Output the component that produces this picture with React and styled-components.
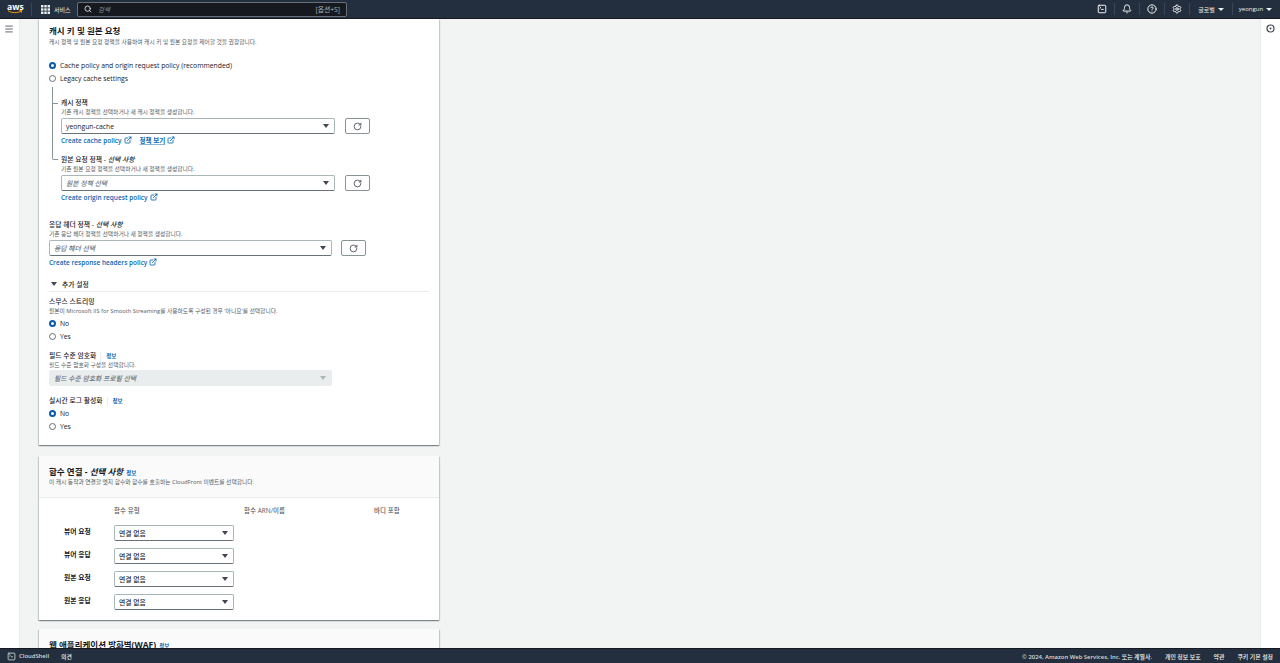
import React from 'react';
import styled, { createGlobalStyle } from 'styled-components';
import {
  Bell, CircleHelp, ExternalLink, Menu, RotateCw, Search, Settings, SquareTerminal,
} from 'lucide-react';

const fonts = '"Open Sans", "Noto Sans CJK KR", sans-serif';
const linkBlue = '#0a66b0';

const GlobalStyle = createGlobalStyle`
  html, body { margin: 0; height: 100%; }
  body { font-family: ${fonts}; background: #f2f3f3; color: #16191f; }
  * { box-sizing: border-box; }
`;

const Page = styled.div`
  width: 1280px;
  height: 663px;
  display: flex;
  flex-direction: column;
  overflow: hidden;
`;

const TopBar = styled.header`
  height: 19px;
  flex: none;
  display: flex;
  align-items: center;
  padding-right: 2px;
  background: #232f3e;
  border-bottom: 1px solid #16191f;
  color: #d5dbdb;
  font-size: 6px;
`;

const AwsLogo = styled.div`
  width: 25px;
  height: 13px;
  margin: 0 8px 0 7px;
  display: flex;
  flex-direction: column;
  align-items: flex-start;
  border-right: 1px solid #3a4654;
  color: #fff;
  font-size: 8.5px;
  font-weight: 700;
  line-height: 8px;
  svg { display: block; margin-top: -1px; }
`;

const ServicesBtn = styled.div`
  width: 37px;
  display: flex;
  align-items: center;
  gap: 4px;
  padding-left: 1px;
  color: #eaeded;
  svg { flex: none; }
`;

const SearchBox = styled.div`
  width: 270px;
  height: 15px;
  display: flex;
  align-items: center;
  gap: 6px;
  padding: 0 6px;
  background: #16191f;
  border: 1px solid #687078;
  border-radius: 2px;
  color: #eaeded;
`;

const SearchHint = styled.span`
  flex: 1;
  font-style: italic;
  font-size: 6.5px;
  color: #879596;
`;

const Shortcut = styled.span`
  font-size: 6.8px;
  color: #aab7b8;
`;

const TopRight = styled.div`
  margin-left: auto;
  display: flex;
  align-items: center;
  height: 100%;
`;

const TopIcon = styled.div`
  width: 25px;
  height: 12px;
  display: flex;
  align-items: center;
  justify-content: center;
  border-right: 1px solid #3a4654;
  color: #f2f3f3;
`;

const TopMenu = styled.div`
  width: ${({ $w }) => $w}px;
  height: 12px;
  display: flex;
  align-items: center;
  justify-content: center;
  gap: 3px;
  border-right: ${({ $sep }) => ($sep ? '1px solid #3a4654' : 'none')};
  color: #eaeded;
`;

const TinyCaret = styled.i`
  width: 0;
  height: 0;
  border-left: 3px solid transparent;
  border-right: 3px solid transparent;
  border-top: 3px solid #eaeded;
`;

const Body = styled.div`
  flex: 1;
  min-height: 0;
  display: flex;
`;

const SideNav = styled.nav`
  width: 20px;
  flex: none;
  background: #fff;
  border-right: 1px solid #e9ebed;
  padding: 5px 0 0 4px;
  color: #414750;
  svg { display: block; }
`;

const Content = styled.main`
  flex: 1;
  min-width: 0;
  padding-left: 19px;
  overflow: hidden;
`;

const Card = styled.section`
  width: 400px;
  margin-bottom: ${({ $mb }) => $mb || 0}px;
  background: #fff;
  box-shadow: 0 1px 1px rgba(0, 28, 36, 0.3), 1px 1px 1px rgba(0, 28, 36, 0.15), -1px 1px 1px rgba(0, 28, 36, 0.15);
`;

const CacheBody = styled.div`
  height: 426px;
  padding: 5px 10px 0;
`;

const CardTitle = styled.h2`
  margin: 0;
  font-size: 8.5px;
  line-height: ${({ $lh }) => $lh || 13}px;
  font-weight: 700;
  color: #16191f;
  em { font-weight: 700; }
`;

const Desc = styled.p`
  margin: 0;
  font-size: 5.75px;
  line-height: 9px;
  color: #545b64;
`;

const RadioList = styled.div`
  margin-top: ${({ $mt }) => $mt || 0}px;
  display: flex;
  flex-direction: column;
`;

const RadioRow = styled.div`
  height: 13px;
  display: flex;
  align-items: center;
  gap: 4px;
  font-size: 6.8px;
  font-weight: 500;
  color: #16191f;
`;

const RadioDot = styled.span`
  width: 7px;
  height: 7px;
  flex: none;
  border-radius: 50%;
  background: #fff;
  border: ${({ $on }) => ($on ? '2px solid #0a5ca8' : '1px solid #687078')};
`;

const Tree = styled.div`
  margin-left: 3px;
  padding-left: 9px;
`;

const TreeNode = styled.div`
  position: relative;
  padding-top: ${({ $pt }) => $pt}px;
  &::before {
    content: '';
    position: absolute;
    left: -9px;
    top: ${({ $top }) => $top}px;
    height: ${({ $len }) => $len}px;
    width: 5px;
    border-left: 1px solid #879596;
    border-bottom: 1px solid #879596;
    border-bottom-left-radius: ${({ $round }) => ($round ? 2 : 0)}px;
  }
`;

const FieldLabel = styled.div`
  display: flex;
  align-items: center;
  font-size: 6.8px;
  line-height: 10px;
  font-weight: 500;
  color: #16191f;
  em { font-weight: 500; }
`;

const InfoLink = styled.span`
  margin-left: ${({ $plain }) => ($plain ? 0 : 4)}px;
  padding-left: ${({ $plain }) => ($plain ? 0 : 5)}px;
  border-left: ${({ $plain }) => ($plain ? 'none' : '1px solid #eaeded')};
  font-size: 5.5px;
  font-weight: 700;
  color: ${linkBlue};
  line-height: 9px;
`;

const SelectRow = styled.div`
  margin-top: ${({ $mt }) => $mt || 0}px;
  display: flex;
  align-items: center;
  gap: ${({ $gap }) => $gap || 10}px;
`;

const Select = styled.div`
  width: ${({ $w }) => $w}px;
  height: 16px;
  display: flex;
  align-items: center;
  justify-content: space-between;
  padding: 0 4px;
  font-size: 6.8px;
  font-weight: 500;
  background: ${({ $disabled }) => ($disabled ? '#eaeded' : '#fff')};
  border: 1px solid ${({ $disabled }) => ($disabled ? '#eaeded' : '#aab7b8')};
  border-bottom-color: ${({ $disabled }) => ($disabled ? '#eaeded' : '#687078')};
  border-radius: 2px;
  color: ${({ $placeholder }) => ($placeholder ? '#687078' : '#16191f')};
  font-style: ${({ $placeholder }) => ($placeholder ? 'italic' : 'normal')};
`;

const Caret = styled.i`
  width: 0;
  height: 0;
  margin-right: 1px;
  border-left: 3px solid transparent;
  border-right: 3px solid transparent;
  border-top: 4px solid ${({ $disabled }) => ($disabled ? '#aab7b8' : '#414750')};
`;

const RefreshBtn = styled.div`
  width: 25px;
  height: 16px;
  display: flex;
  align-items: center;
  justify-content: center;
  background: #fff;
  border: 1px solid #879596;
  border-radius: 2px;
  color: #414750;
`;

const LinkRow = styled.div`
  height: 12px;
  display: flex;
  align-items: center;
  gap: 8px;
  font-size: 6.5px;
`;

const DocLink = styled.a`
  display: flex;
  align-items: center;
  gap: 2px;
  color: ${linkBlue};
  font-weight: 600;
  span {
    text-decoration: ${({ $underline }) => ($underline ? 'underline' : 'none')};
    text-decoration-thickness: 1px;
    text-decoration-color: #8db4d6;
  }
`;

const SpacedBlock = styled.div`
  margin-top: ${({ $mt }) => $mt || 0}px;
`;

const Expand = styled.div`
  height: 16px;
  margin-top: ${({ $mt }) => $mt || 0}px;
  padding-left: 2px;
  display: flex;
  align-items: center;
  gap: 4px;
  font-size: 6.8px;
  font-weight: 500;
  color: #16191f;
  border-bottom: 1px solid #eaeded;
`;

const CardHead = styled.div`
  height: 42px;
  padding: 9px 10px 0;
  background: #fafafa;
  border-bottom: 1px solid #eaeded;
`;

const HeadTitle = styled.div`
  display: flex;
  align-items: baseline;
  gap: 3px;
`;

const FnGrid = styled.div`
  height: 122px;
  padding: 8px 0 0 25px;
  display: grid;
  grid-template-columns: 50px 130px 130px 1fr;
  grid-template-rows: 19px;
  grid-auto-rows: 23px;
  align-content: start;
`;

const FnHead = styled.div`
  font-size: 6.5px;
  line-height: 9px;
  font-weight: 500;
  color: #545b64;
`;

const FnLabel = styled.div`
  grid-column: 1;
  font-size: 6.8px;
  font-weight: 700;
  padding-top: 2px;
  line-height: 10px;
`;

const FnCell = styled.div`
  grid-column: 2 / -1;
`;

const BottomBar = styled.footer`
  height: 15px;
  flex: none;
  display: flex;
  align-items: center;
  background: #232f3e;
  border-top: 1px solid #16191f;
  color: #d5dbdb;
  font-size: 5.9px;
  font-weight: 600;
  padding: 0 7px;
`;

const ShellBtn = styled.div`
  display: flex;
  align-items: center;
  gap: 3px;
  margin-right: 12px;
`;

const Legal = styled.div`
  margin-left: auto;
  display: flex;
  gap: 13px;
`;

const Rail = styled.aside`
  width: 20px;
  flex: none;
  background: #fff;
  border-left: 1px solid #e9ebed;
  padding: 5px 0 0 5px;
  color: #414750;
  svg { display: block; }
`;

const GridIcon = () => (
  <svg width="9" height="9" viewBox="0 0 11 11" fill="#eaeded">
    {[0, 4, 8].flatMap((y) => [0, 4, 8].map((x) => (
      <rect key={`${x}-${y}`} x={x} y={y} width="3" height="3" />
    )))}
  </svg>
);

const RailIcon = () => (
  <svg width="9" height="9" viewBox="0 0 9 9" fill="none" stroke="currentColor">
    <circle cx="4.5" cy="4.5" r="3.5" strokeWidth="1.2" />
    <circle cx="4.5" cy="4.5" r="1" fill="currentColor" strokeWidth="0" />
  </svg>
);

const Radio = ({ on, children }) => (
  <RadioRow>
    <RadioDot $on={on} />
    {children}
  </RadioRow>
);

const Ext = () => <ExternalLink size={8} strokeWidth={2.6} />;

const Refresh = () => (
  <RefreshBtn>
    <RotateCw size={9} strokeWidth={2.2} />
  </RefreshBtn>
);

const fnRows = ['뷰어 요청', '뷰어 응답', '원본 요청', '원본 응답'];

export default function App() {
  return (
    <Page>
      <GlobalStyle />
      <TopBar>
        <AwsLogo>
          aws
          <svg width="16" height="4" viewBox="0 0 16 4" fill="none">
            <path d="M1 .8c3.9 2.4 9.2 2.4 13 .4M12.4.6l2.4-.2-.5 2.2" stroke="#ff9900" strokeWidth="1" />
          </svg>
        </AwsLogo>
        <ServicesBtn>
          <GridIcon />
          서비스
        </ServicesBtn>
        <SearchBox>
          <Search size={8} strokeWidth={2.5} />
          <SearchHint>검색</SearchHint>
          <Shortcut>[옵션+S]</Shortcut>
        </SearchBox>
        <TopRight>
          <TopIcon><SquareTerminal size={10} strokeWidth={2.4} /></TopIcon>
          <TopIcon><Bell size={10} strokeWidth={2.4} /></TopIcon>
          <TopIcon><CircleHelp size={10} strokeWidth={2.4} /></TopIcon>
          <TopIcon><Settings size={10} strokeWidth={2.4} /></TopIcon>
          <TopMenu $w={43} $sep>글로벌 <TinyCaret /></TopMenu>
          <TopMenu $w={45}>yeongun <TinyCaret /></TopMenu>
        </TopRight>
      </TopBar>

      <Body>
        <SideNav><Menu size={10} strokeWidth={2} /></SideNav>
        <Content>
          <Card $mb={11}>
            <CacheBody>
              <CardTitle $lh={14}>캐시 키 및 원본 요청</CardTitle>
              <Desc>캐시 정책 및 원본 요청 정책을 사용하여 캐시 키 및 원본 요청을 제어할 것을 권장합니다.</Desc>
              <RadioList $mt={12}>
                <Radio on>Cache policy and origin request policy (recommended)</Radio>
                <Radio>Legacy cache settings</Radio>
              </RadioList>
              <Tree>
                <TreeNode $pt={13} $top={2} $len={16}>
                  <FieldLabel>캐시 정책</FieldLabel>
                  <Desc>기존 캐시 정책을 선택하거나 새 캐시 정책을 생성합니다.</Desc>
                  <SelectRow $mt={1}>
                    <Select $w={274}>yeongun-cache<Caret /></Select>
                    <Refresh />
                  </SelectRow>
                  <LinkRow>
                    <DocLink>Create cache policy <Ext /></DocLink>
                    <DocLink $underline><span>정책 보기</span> <Ext /></DocLink>
                  </LinkRow>
                </TreeNode>
                <TreeNode $pt={9} $top={-45} $len={58} $round>
                  <FieldLabel>원본 요청 정책 -&nbsp;<em>선택 사항</em></FieldLabel>
                  <Desc>기존 원본 요청 정책을 선택하거나 새 정책을 생성합니다.</Desc>
                  <SelectRow $mt={1}>
                    <Select $w={274} $placeholder>원본 정책 선택<Caret /></Select>
                    <Refresh />
                  </SelectRow>
                  <LinkRow>
                    <DocLink>Create origin request policy <Ext /></DocLink>
                  </LinkRow>
                </TreeNode>
              </Tree>
              <SpacedBlock $mt={17}>
                <FieldLabel>응답 헤더 정책 -&nbsp;<em>선택 사항</em></FieldLabel>
                <Desc>기존 응답 헤더 정책을 선택하거나 새 정책을 생성합니다.</Desc>
                <SelectRow $mt={1} $gap={9}>
                  <Select $w={283} $placeholder>응답 헤더 선택<Caret /></Select>
                  <Refresh />
                </SelectRow>
                <LinkRow>
                  <DocLink>Create response headers policy <Ext /></DocLink>
                </LinkRow>
              </SpacedBlock>
              <Expand $mt={8}>
                <Caret />
                추가 설정
              </Expand>
              <SpacedBlock $mt={5}>
                <FieldLabel>스무스 스트리밍</FieldLabel>
                <Desc>원본이 Microsoft IIS for Smooth Streaming를 사용하도록 구성된 경우 '아니요'를 선택합니다.</Desc>
                <RadioList $mt={1}>
                  <Radio on>No</Radio>
                  <Radio>Yes</Radio>
                </RadioList>
              </SpacedBlock>
              <SpacedBlock $mt={8}>
                <FieldLabel>필드 수준 암호화<InfoLink>정보</InfoLink></FieldLabel>
                <Desc>필드 수준 암호화 구성을 선택합니다.</Desc>
                <Select $w={283} $disabled $placeholder>필드 수준 암호화 프로필 선택<Caret $disabled /></Select>
              </SpacedBlock>
              <SpacedBlock $mt={10}>
                <FieldLabel>실시간 로그 활성화<InfoLink>정보</InfoLink></FieldLabel>
                <RadioList $mt={1}>
                  <Radio on>No</Radio>
                  <Radio>Yes</Radio>
                </RadioList>
              </SpacedBlock>
            </CacheBody>
          </Card>

          <Card $mb={9}>
            <CardHead>
              <HeadTitle>
                <CardTitle>함수 연결 - <em>선택 사항</em></CardTitle>
                <InfoLink $plain>정보</InfoLink>
              </HeadTitle>
              <Desc>이 캐시 동작과 연결할 엣지 함수와 함수를 호출하는 CloudFront 이벤트를 선택합니다.</Desc>
            </CardHead>
            <FnGrid>
              <div />
              <FnHead>함수 유형</FnHead>
              <FnHead>함수 ARN/이름</FnHead>
              <FnHead>바디 포함</FnHead>
              {fnRows.map((name) => (
                <React.Fragment key={name}>
                  <FnLabel>{name}</FnLabel>
                  <FnCell><Select $w={120}>연결 없음<Caret /></Select></FnCell>
                </React.Fragment>
              ))}
            </FnGrid>
          </Card>

          <Card>
            <CardHead>
              <HeadTitle>
                <CardTitle>웹 애플리케이션 방화벽(WAF)</CardTitle>
                <InfoLink $plain>정보</InfoLink>
              </HeadTitle>
            </CardHead>
          </Card>
        </Content>
        <Rail><RailIcon /></Rail>
      </Body>

      <BottomBar>
        <ShellBtn><SquareTerminal size={9} strokeWidth={2.2} />CloudShell</ShellBtn>
        의견
        <Legal>
          <span>© 2024, Amazon Web Services, Inc. 또는 계열사.</span>
          <span>개인 정보 보호</span>
          <span>약관</span>
          <span>쿠키 기본 설정</span>
        </Legal>
      </BottomBar>
    </Page>
  );
}
